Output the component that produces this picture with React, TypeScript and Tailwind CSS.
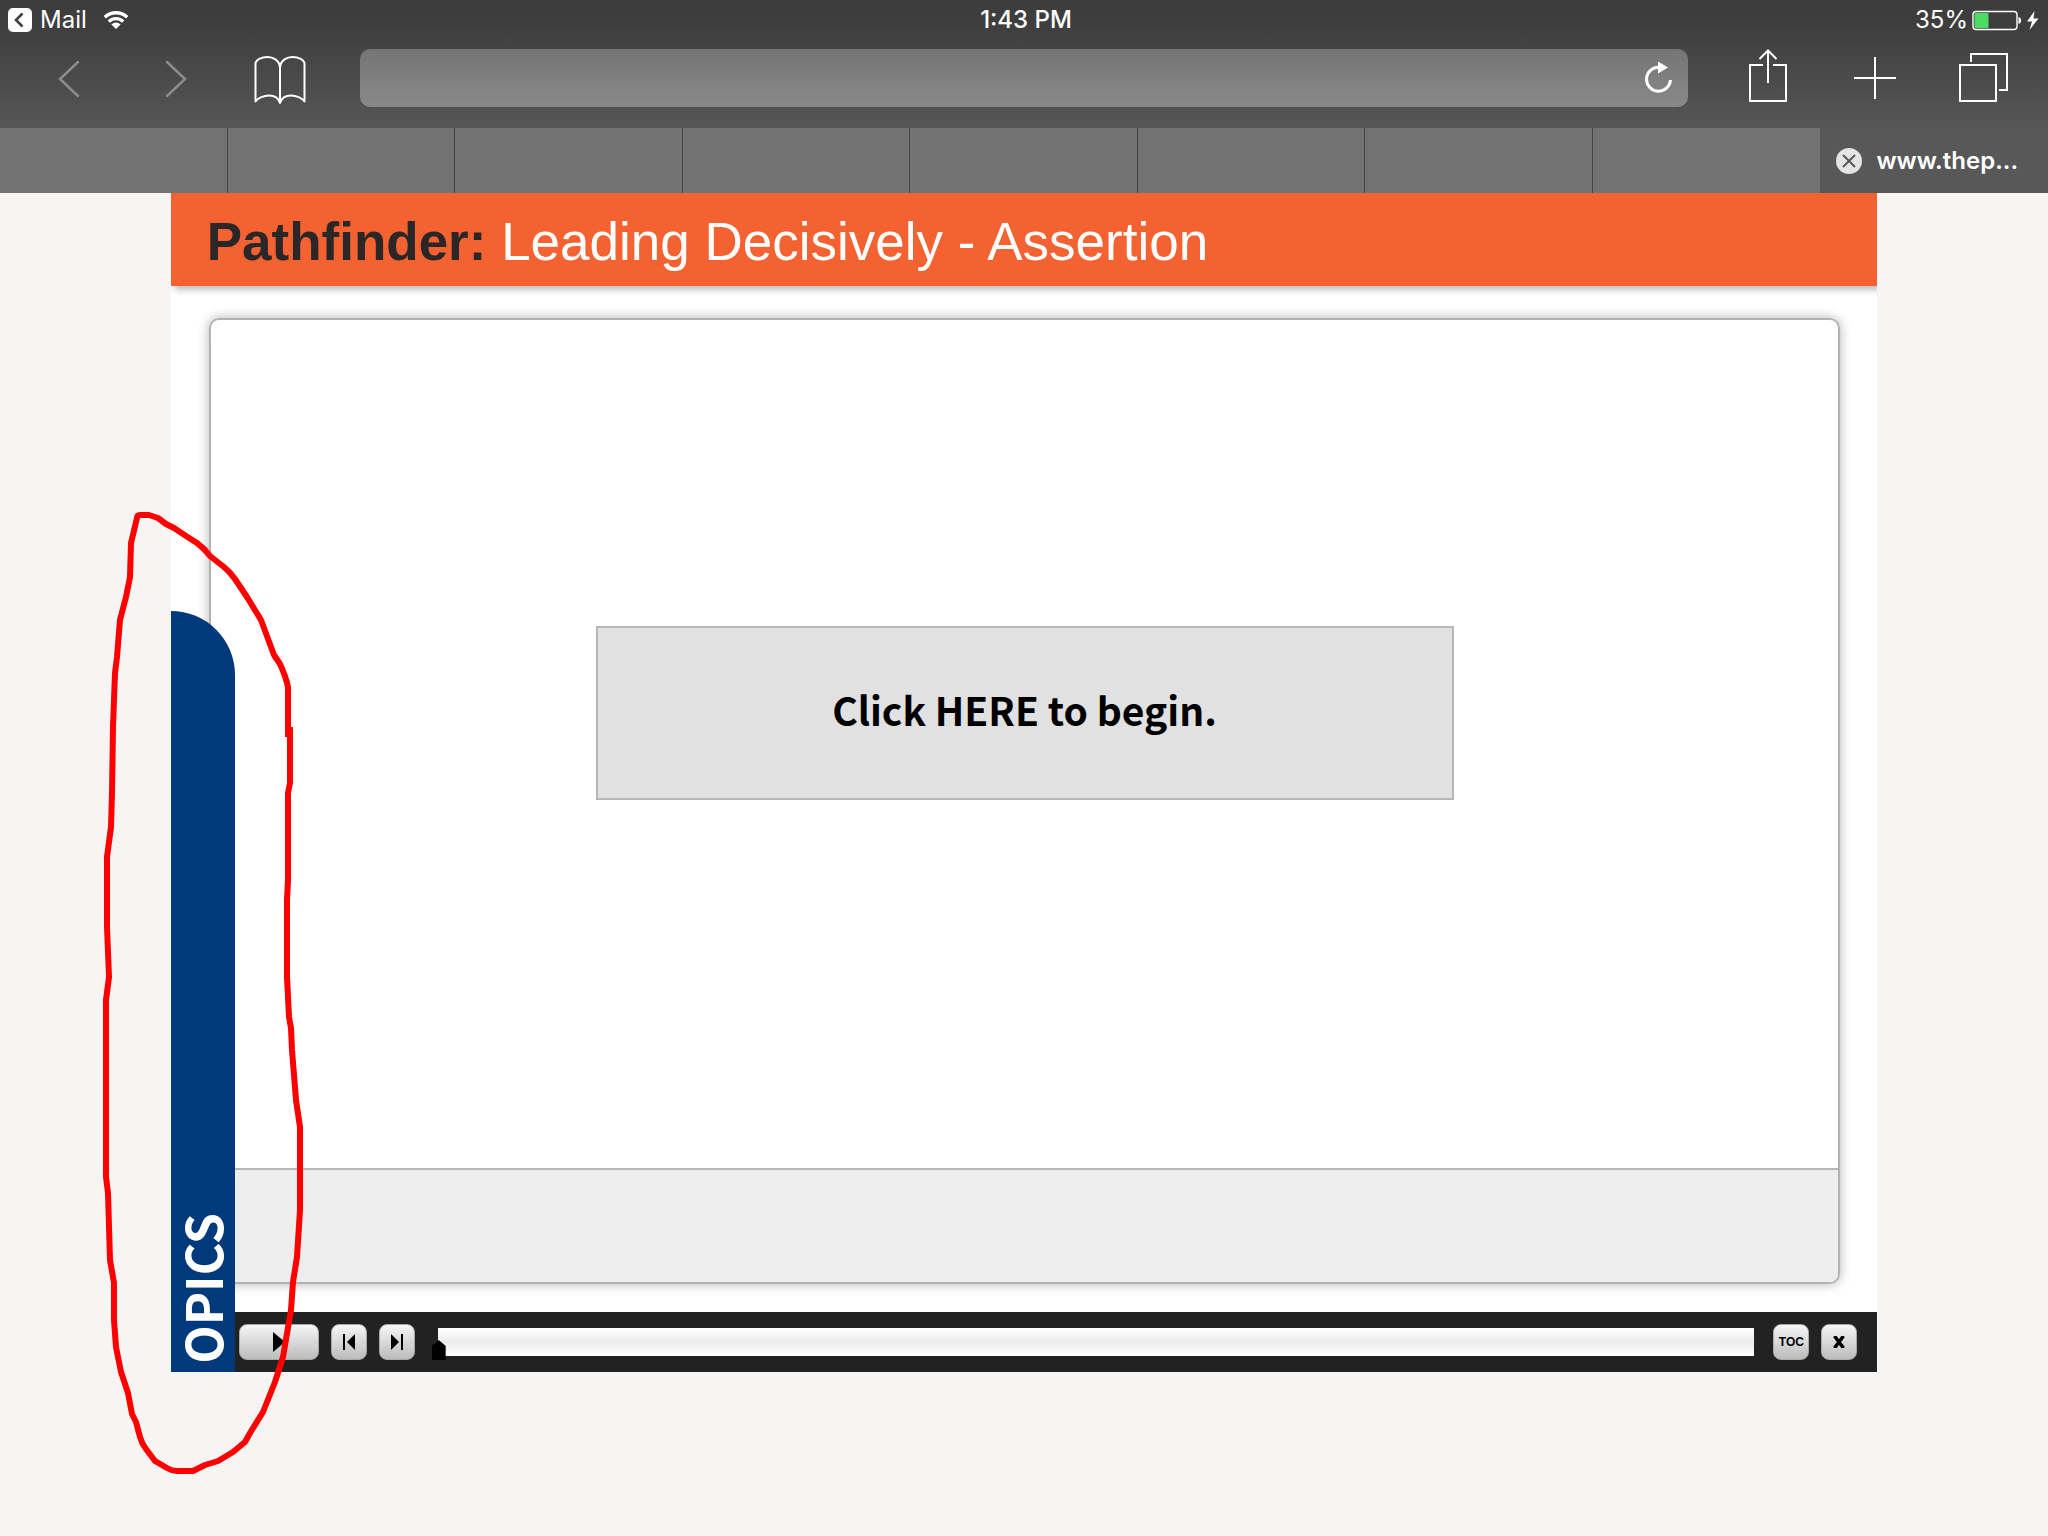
import React from "react";

const tabs = [
  "Tab 1",
  "Tab 2",
  "Tab 3",
  "Tab 4",
  "Tab 5",
  "Tab 6",
  "Tab 7",
  "Tab 8",
];

const headline = "font-['Liberation_Sans',Arial,sans-serif]";
const humanist = "font-['Noto_Sans_CJK_SC',sans-serif]";

const StatusBar = () => (
  <div className="grid grid-cols-3 items-center h-10 pl-2 pr-1 text-2xl">
    <div className="flex items-center">
      <svg className="size-6" viewBox="0 0 24 24">
        <rect width="24" height="24" rx="5" fill="#fff" />
        <path
          d="M14.5 5.5 8 12l6.500 6.500"
          fill="none"
          stroke="#404040"
          strokeWidth="2.600"
        />
      </svg>
      <span className="ml-2">Mail</span>
      <svg className="ml-4 w-[26px] h-5" viewBox="0 0 26 20" fill="none">
        <g stroke="#fff" strokeWidth="3.400">
          <path d="M1.800 7.300a16 16 0 0 1 22.400 0" />
          <path d="M5.800 11.600a10.200 10.200 0 0 1 14.400 0" />
        </g>
        <path d="M13 19 8.400 14.400a6.500 6.500 0 0 1 9.200 0z" fill="#fff" />
      </svg>
    </div>
    <div className="text-center font-medium">1:43 PM</div>
    <div className="flex items-center justify-end">
      <span>35%</span>
      <svg className="ml-1 w-[72px] h-6" viewBox="0 0 72 24">
        <rect
          x="1"
          y="3.500"
          width="44"
          height="18"
          rx="3"
          fill="none"
          stroke="#fff"
          strokeWidth="1.400"
        />
        <rect x="2.500" y="5" width="14" height="15" rx="1" fill="#4cd964" />
        <path d="M46.500 9c3.500 .5 3.500 6.500 0 7z" fill="#fff" />
        <path d="M62.500 3 55 13.500h5L57.500 22 66.500 10.500h-5z" fill="#fff" />
      </svg>
    </div>
  </div>
);

type ToolButtonProps = {
  label: string;
  disabled?: boolean;
  children: React.ReactNode;
};

const ToolButton = ({ label, disabled, children }: ToolButtonProps) => (
  <button
    aria-label={label}
    disabled={disabled}
    className="w-20 h-[58px] text-white disabled:text-[#8c8c8c]"
  >
    <svg
      className="w-20 h-[58px]"
      viewBox="0 0 80 58"
      fill="none"
      stroke="currentColor"
      strokeWidth="2"
    >
      {children}
    </svg>
  </button>
);

const Toolbar = () => (
  <div className="flex h-[88px] pt-[9px]">
    <div className="flex gap-[26px] pl-[29px] pr-[39px]">
      <ToolButton label="Back" disabled>
        <path d="M49 13 31 30l18 17" strokeWidth="2.500" strokeLinecap="round" />
      </ToolButton>
      <ToolButton label="Forward" disabled>
        <path d="M32 13 50 30 32 47" strokeWidth="2.500" strokeLinecap="round" />
      </ToolButton>
      <ToolButton label="Bookmarks">
        <path
          d="M39 54V18C38 11 32 8 26.500 8 20 8 15 11 14.500 14V52.500C17 49 23 46.500 28 46.500 33 46.500 37.500 49 39 54zM39 54V18C40 11 46 8 51.500 8 58 8 63 11 63.500 14V52.500C61 49 55 46.500 50 46.500 45 46.500 40.500 49 39 54z"
          strokeLinejoin="round"
        />
      </ToolButton>
    </div>
    <div className="flex flex-1 h-[58px] rounded-[10px] bg-linear-to-b from-[#757575] to-[#898989]">
      <input
        aria-label="Address"
        className="flex-1 min-w-0 px-4 bg-transparent outline-none"
      />
      <button aria-label="Reload" className="mr-2">
        <svg className="w-11 h-[58px]" viewBox="0 0 44 58" fill="none">
          <path
            d="M34.500 31A12 12 0 1 1 23 18.200"
            stroke="#fff"
            strokeWidth="3"
          />
          <path d="M22 12.500v12l10-6z" fill="#fff" />
        </svg>
      </button>
    </div>
    <div className="flex gap-[27px] pl-10 pr-[26px]">
      <ToolButton label="Share">
        <path d="M35 16H22v36h36V16H45M40 34V2M31.500 10 40 1.500 48.500 10" />
      </ToolButton>
      <ToolButton label="New tab">
        <path d="M19 29h42M40 8v42" />
      </ToolButton>
      <ToolButton label="Show all tabs">
        <path d="M18 16h36v36H18zM29 13V5h36v36h-8" />
      </ToolButton>
    </div>
  </div>
);

const TabStrip = () => (
  <div className="grid grid-cols-9 h-[65px]">
    {tabs.map((tab) => (
      <button
        key={tab}
        aria-label={tab}
        className="bg-[#727272] border-r border-[#454545] nth-8:border-r-0"
      />
    ))}
    <div className="flex items-center pl-4 text-2xl font-semibold">
      <button aria-label="Close tab">
        <svg className="size-[26px]" viewBox="0 0 26 26">
          <circle cx="13" cy="13" r="13" fill="#e4e4e4" />
          <path d="m7 7 12 12M19 7 7 19" stroke="#575757" strokeWidth="2" />
        </svg>
      </button>
      <span className="ml-[14px]">www.thep...</span>
    </div>
  </div>
);

type PlayerButtonProps = {
  label: string;
  wide?: boolean;
  children: React.ReactNode;
};

const PlayerButton = ({ label, wide, children }: PlayerButtonProps) => (
  <button
    aria-label={label}
    className={`${
      wide ? "w-20" : "w-9"
    } flex shrink-0 items-center justify-center h-9 rounded-lg border border-[#a8a8a8] bg-linear-to-b from-[#f6f6f6] to-[#bcbcbc] text-xs font-bold text-black`}
  >
    {children}
  </button>
);

const Player = () => (
  <div className="flex items-center h-[60px] pl-[68px] pr-5 bg-[#222]">
    <div className="flex gap-3">
      <PlayerButton label="Play" wide>
        <svg className="w-3 h-5" viewBox="0 0 12 20">
          <path d="M0 0 12 10 0 20z" />
        </svg>
      </PlayerButton>
      <PlayerButton label="Previous">
        <svg className="w-3 h-4" viewBox="0 0 12 16">
          <path d="M0 0h2v16H0zM12 0v16L4 8z" />
        </svg>
      </PlayerButton>
      <PlayerButton label="Next">
        <svg className="w-3 h-4" viewBox="0 0 12 16">
          <path d="M10 0h2v16h-2zM0 0v16l8-8z" />
        </svg>
      </PlayerButton>
    </div>
    <input
      type="range"
      aria-label="Seek"
      defaultValue={0}
      className="flex-1 min-w-0 h-7 ml-[23px] mr-[19px] appearance-none bg-linear-to-b from-white via-[#ececec] to-white [&::-webkit-slider-runnable-track]:h-7 [&::-webkit-slider-thumb]:appearance-none [&::-webkit-slider-thumb]:w-[14px] [&::-webkit-slider-thumb]:h-5 [&::-webkit-slider-thumb]:mt-3 [&::-webkit-slider-thumb]:-ml-[6px] [&::-webkit-slider-thumb]:bg-black [&::-webkit-slider-thumb]:[clip-path:polygon(50%_0,100%_30%,100%_100%,0_100%,0_30%)]"
    />
    <div className="flex gap-3">
      <PlayerButton label="TOC">
        <span className={headline}>TOC</span>
      </PlayerButton>
      <PlayerButton label="Close">
        <svg className="size-3" viewBox="0 0 12 12" stroke="#000">
          <path d="m1.500 0 9 12M10.500 0l-9 12" strokeWidth="3.500" />
        </svg>
      </PlayerButton>
    </div>
  </div>
);

// hand drawn circle around the topics tab
const Markup = () => (
  <svg
    className="absolute left-[100px] top-[508px] w-[208px] h-[970px] pointer-events-none"
    viewBox="100 508 208 970"
    fill="none"
    stroke="#f00"
    strokeWidth="6"
    strokeLinejoin="round"
  >
    <path d="M288 737V687Q286 677 280 664L274 655 261 620 247 597 235 579Q230 572 224 567L210 556Q204 548 197 543L186 536 174 528 166 524 158 518 149 515H140Q137 515 137 518L131 543 130 577 126 597 120 620 117 657 115 673 113 727 112 793 111 827 107 857V927L109 977 106 1000V1177L108 1193 110 1260 114 1283V1320L116 1347 121 1372 128 1393 132 1414 136 1422 140 1437Q142 1444 146 1449L155 1461 167 1468Q172 1471 177 1471H193L205 1465 218 1461 233 1452 245 1442 250 1433 263 1412 275 1382 283 1357 291 1310 293 1282 297 1257 300 1210V1127L296 1100 292 1050 291 1028 289 1017 287 977V900L288 880V793L290 783V727" />
  </svg>
);

const Course = () => (
  <main className="relative w-5/6 mx-auto overflow-hidden bg-white">
    <header className="flex items-center h-[93px] px-9 pt-1 bg-[#f46231] shadow-[4px_4px_6px_rgba(0,0,0,0.25)]">
      <h1 className={`${headline} text-[53px] leading-none text-white`}>
        <b className="text-[#2b2627]">Pathfinder:</b> Leading Decisively -
        Assertion
      </h1>
    </header>
    <div className="pl-[38px] pr-[37px] pt-8 pb-7">
      <section className="overflow-hidden rounded-[10px] border-2 border-[#b2b2b2] shadow-[0_0_12px_rgba(0,0,0,0.3)]">
        <div className="flex justify-center pt-[306px] pb-[368px]">
          <button
            className={`${humanist} w-[858px] h-[174px] pb-2 border-2 border-[#b7b7b7] bg-[#e1e1e1] text-[39px] font-bold text-black`}
          >
            Click HERE to begin.
          </button>
        </div>
        <div className="h-[114px] border-t-2 border-[#b7b7b7] bg-[#ededed]" />
      </section>
    </div>
    <Player />
    <button
      className={`${humanist} absolute left-0 bottom-0 flex items-end justify-start w-16 h-[761px] pb-2 rounded-tr-[64px] bg-[#003a7d] text-[50px] leading-[60px] font-bold text-white`}
    >
      <span className="[writing-mode:vertical-rl] rotate-180">OPICS</span>
    </button>
  </main>
);

export default function App() {
  return (
    <div className="relative min-h-screen bg-[#f6f5f3]">
      <div className="bg-linear-to-b from-[#3d3d3d] from-10% to-[#585858] to-70% font-[Inter,sans-serif] text-white">
        <StatusBar />
        <Toolbar />
        <TabStrip />
      </div>
      <Course />
      <Markup />
    </div>
  );
}
